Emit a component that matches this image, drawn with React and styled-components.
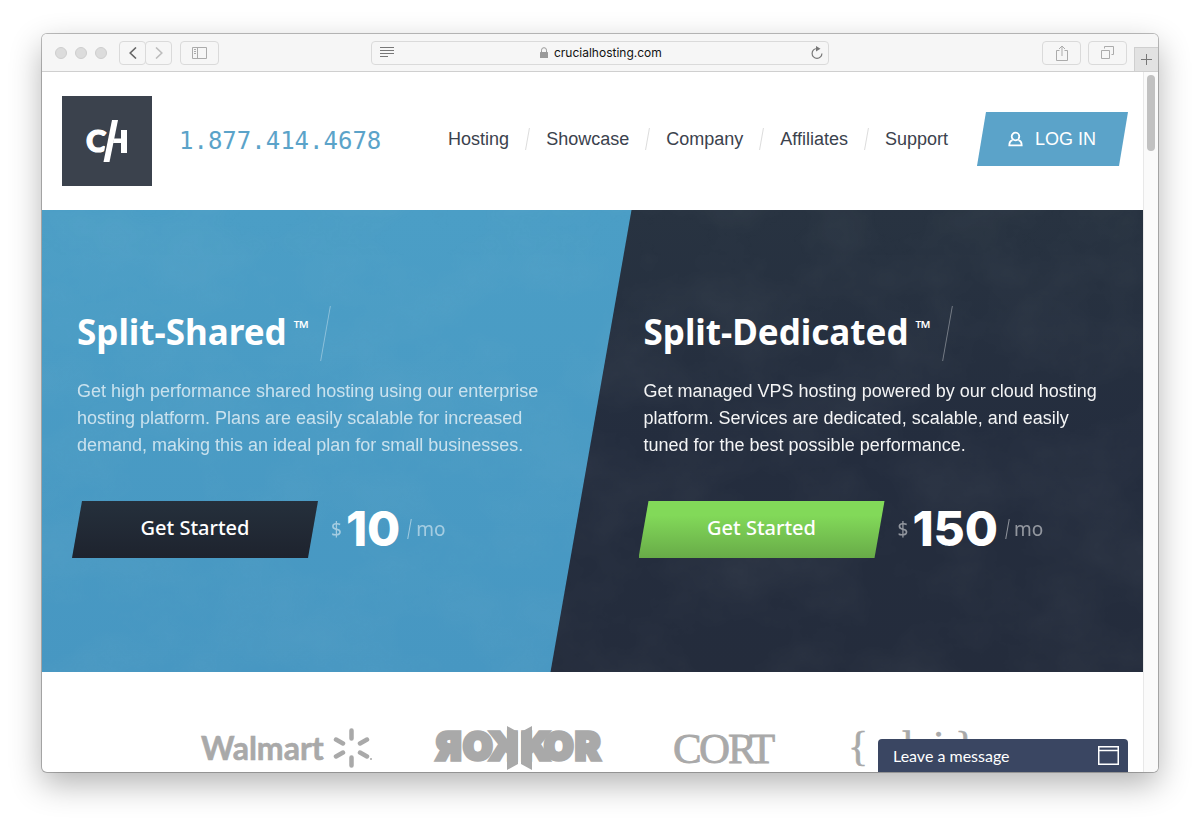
import React from 'react';
import styled, { createGlobalStyle } from 'styled-components';

const sans = '"Liberation Sans", Arial, sans-serif';
const display = '"Noto Sans", "Open Sans", sans-serif';
const logoGray = '#a9a9a9';

const GlobalStyle = createGlobalStyle`
  *, *::before, *::after { box-sizing: border-box; }
  body { margin: 0; background: #fff; font-family: ${sans}; }
  button { font: inherit; border: 0; padding: 0; margin: 0; cursor: pointer; }
  a { color: inherit; text-decoration: none; }
  svg { display: block; }
`;

const Desktop = styled.div`
  min-height: 100vh;
  padding: 34px 42px 50px;
  display: flex;
  overflow: hidden;
`;

const BrowserWindow = styled.div`
  flex: 1;
  min-width: 0;
  display: flex;
  flex-direction: column;
  overflow: hidden;
  background: #fff;
  border-radius: 5px;
  box-shadow: 0 0 0 1px rgba(0, 0, 0, 0.25), 0 12px 32px rgba(0, 0, 0, 0.3);
`;

const Toolbar = styled.div`
  display: grid;
  grid-template-columns: 1fr minmax(0, 41%) 1fr;
  height: 38px;
  background: #f6f6f6;
  border-bottom: 1px solid #cfcfcf;
`;

const ToolGroup = styled.div`
  display: flex;
  align-items: center;
  justify-content: ${(p) => (p.$end ? 'flex-end' : 'flex-start')};
  gap: ${(p) => (p.$end ? '7px' : '8px')};
  padding-left: ${(p) => (p.$end ? '0' : '13px')};
`;

const Lights = styled.div`
  display: flex;
  gap: 8px;
  margin-right: 4px;
`;

const Light = styled.span`
  width: 12px;
  height: 12px;
  border-radius: 50%;
  background: #dcdcdc;
  border: 1px solid #cecece;
`;

const ToolButton = styled.button`
  display: flex;
  align-items: center;
  justify-content: center;
  width: ${(p) => (p.$narrow ? '27px' : '39px')};
  height: 24px;
  background: #f6f6f6;
  border: 1px solid #dadada;
  border-radius: 4px;
  color: ${(p) => p.$tone || '#ababab'};
`;

const Joined = styled.div`
  display: flex;
  ${ToolButton} + ${ToolButton} { margin-left: -1px; }
`;

const NewTab = styled.button`
  display: flex;
  align-items: center;
  justify-content: center;
  align-self: flex-end;
  width: 24px;
  height: 24px;
  background: #e2e2e2;
  border-top: 1px solid #cfcfcf;
  border-left: 1px solid #cfcfcf;
  color: #777;
`;

const AddressBar = styled.div`
  display: grid;
  grid-template-columns: 1fr auto 1fr;
  align-items: center;
  align-self: center;
  height: 24px;
  padding: 0 5px 0 8px;
  border: 1px solid #dadada;
  border-radius: 4px;
  color: #777;
  > :last-child { justify-self: end; }
`;

const Location = styled.label`
  display: flex;
  align-items: center;
  gap: 6px;
  color: #9a9a9a;
`;

const LocationInput = styled.input`
  width: 109px;
  padding: 0;
  border: 0;
  outline: 0;
  background: transparent;
  color: #111;
  font: 12px/16px Inter, sans-serif;
`;

const IconButton = styled.button`
  background: none;
  color: inherit;
`;

const Viewport = styled.div`
  position: relative;
  flex: 1;
  display: flex;
`;

const Page = styled.main`
  flex: 1;
  min-width: 0;
`;

const ScrollTrack = styled.div`
  width: 15px;
  padding: 3px;
  background: #fafafa;
  border-left: 1px solid #e8e8e8;
`;

const ScrollThumb = styled.div`
  width: 8px;
  height: 76px;
  border-radius: 4px;
  background: #c1c1c1;
`;

const Header = styled.header`
  display: flex;
  align-items: center;
  padding: 24px 15px 24px 20px;
`;

const Brand = styled.a`
  width: 90px;
  height: 90px;
  background: #3b424d;
`;

const Phone = styled.a`
  margin-left: 27px;
  color: #5ba3c9;
  font: 24px/28px "DejaVu Sans Mono", monospace;
`;

const HeaderRight = styled.div`
  display: flex;
  align-items: center;
  margin-left: auto;
  padding-bottom: 4px;
  font-size: 18px;
  line-height: 24px;
`;

const Nav = styled.nav`
  display: flex;
  align-items: center;
  gap: 18px;
  margin-right: 29px;
  color: #3b424d;
`;

const Slash = styled.span`
  width: 1px;
  height: ${(p) => p.$height};
  background: ${(p) => p.$color};
  transform: skewX(-10deg);
`;

const LoginLink = styled.a`
  display: flex;
  align-items: center;
  gap: 12px;
  height: 54px;
  padding: 0 32px 0 31px;
  background: #5ba3c9;
  color: #fff;
  clip-path: polygon(9px 0, 100% 0, calc(100% - 9px) 100%, 0 100%);
`;

const Hero = styled.section`
  position: relative;
  display: grid;
  grid-template-columns: 1fr 1fr;
  background: linear-gradient(#283341, #242d3e 50%, #242c3c);
  &::before {
    content: '';
    position: absolute;
    inset: 0;
    background: linear-gradient(#4b9ec6, #4797c2);
    clip-path: polygon(0 0, calc(50% + 39px) 0, calc(50% - 42px) 100%, 0 100%);
  }
`;

const CloudTexture = styled.svg`
  position: absolute;
  inset: 0;
  width: 100%;
  height: 100%;
`;

const Plan = styled.article`
  position: relative;
  padding: 96px 32px 114px ${(p) => (p.$second ? '51px' : '35px')};
  color: #fff;
`;

const PlanTitle = styled.div`
  display: flex;
  align-items: center;
  gap: 16px;
  height: 55px;
`;

const PlanName = styled.h2`
  display: flex;
  align-items: flex-start;
  gap: 7px;
  margin: 0;
  padding-bottom: 4px;
  font: 700 35px/40px ${display};
`;

const Trademark = styled.sup`
  padding-top: 6px;
  font: 400 20px/20px ${display};
`;

const PlanText = styled.p`
  max-width: 466px;
  margin: 17px 0 42px;
  font-size: 18px;
  line-height: 27px;
  opacity: ${(p) => (p.$soft ? 0.7 : 0.95)};
`;

const PlanAction = styled.div`
  display: flex;
  align-items: center;
  gap: 13px;
  margin-left: -5px;
`;

const StartButton = styled.button`
  width: 246px;
  height: 57px;
  padding-bottom: 4px;
  background: ${(p) =>
    p.$green
      ? 'linear-gradient(#82d959 25%, #68ab48)'
      : 'linear-gradient(#25303c, #1e232e)'};
  color: #fff;
  font: 500 20px/24px ${display};
  clip-path: polygon(10px 0, 100% 0, calc(100% - 10px) 100%, 0 100%);
`;

const Price = styled.div`
  display: flex;
  align-items: center;
  padding-bottom: 2px;
  font: 19px/24px ${display};
`;

const Muted = styled.span`
  opacity: 0.5;
`;

const Amount = styled.strong`
  margin: 0 9px 0 4px;
  font: 800 48px/48px Inter, sans-serif;
`;

const Period = styled.span`
  display: flex;
  align-items: center;
  gap: 6px;
  opacity: 0.5;
`;

const Clients = styled.section`
  display: flex;
  justify-content: center;
  gap: 65px;
  padding: 54px 20px 2px;
`;

const ClientLogo = styled.svg`
  height: 44px;
  overflow: visible;
  fill: ${logoGray};
`;

const ChatButton = styled.button`
  position: absolute;
  right: 30px;
  bottom: 0;
  display: flex;
  align-items: center;
  justify-content: space-between;
  width: 250px;
  height: 33px;
  padding: 0 9px 0 15px;
  background: #3a4662;
  color: #fff;
  border-radius: 4px 4px 0 0;
  font: 16px/24px Lato, sans-serif;
`;

function Icon({ w, h, children, ...rest }) {
  return (
    <svg width={w} height={h} viewBox={`0 0 ${w} ${h}`} fill="none" stroke="currentColor" aria-hidden="true" {...rest}>
      {children}
    </svg>
  );
}

function BrowserToolbar() {
  return (
    <Toolbar>
      <ToolGroup>
        <Lights><Light /><Light /><Light /></Lights>
        <Joined>
          <ToolButton $narrow $tone="#666" aria-label="Back">
            <Icon w={8} h={12} strokeWidth="1.6"><path d="M7 .5 1.2 6 7 11.5" /></Icon>
          </ToolButton>
          <ToolButton $narrow $tone="#bdbdbd" aria-label="Forward">
            <Icon w={8} h={12} strokeWidth="1.6"><path d="M1 .5 6.8 6 1 11.5" /></Icon>
          </ToolButton>
        </Joined>
        <ToolButton aria-label="Sidebar">
          <Icon w={15} h={12}><path d="M.5.5h14v11H.5zM5.500.5v11M2 2.500h2M2 4.500h2M2 6.500h2" /></Icon>
        </ToolButton>
      </ToolGroup>
      <AddressBar>
        <Icon w={14} h={11}><path d="M0 .5h14M0 3.500h14M0 6.500h14M0 9.500h8" /></Icon>
        <Location>
          <Icon w={8} h={11}>
            <rect y="5" width="8" height="6" rx="0.5" fill="currentColor" stroke="none" />
            <path d="M1.500 5V3.200a2.500 2.500 0 0 1 5 0V5" />
          </Icon>
          <LocationInput aria-label="Address" defaultValue="crucialhosting.com" />
        </Location>
        <IconButton aria-label="Reload">
          <Icon w={12} h={13}>
            <path d="M6 2.500a4.900 4.900 0 1 0 4.900 4.900" strokeWidth="1.200" />
            <path d="M5 0 9.500 2.700 5 5.400z" fill="currentColor" stroke="none" />
          </Icon>
        </IconButton>
      </AddressBar>
      <ToolGroup $end>
        <ToolButton aria-label="Share">
          <Icon w={12} h={16}><path d="M3.500 5.500h-3v10h11v-10h-3M6 11V1M3 4l3-3 3 3" /></Icon>
        </ToolButton>
        <ToolButton aria-label="Show tabs">
          <Icon w={13} h={13}><path d="M.5 4.500h8v8h-8zM3.500 2.500v-2h9v8h-2" /></Icon>
        </ToolButton>
        <NewTab aria-label="New tab">
          <Icon w={11} h={11}><path d="M5.500 0v11M0 5.500h11" /></Icon>
        </NewTab>
      </ToolGroup>
    </Toolbar>
  );
}

const links = ['Hosting', 'Showcase', 'Company', 'Affiliates', 'Support'];

function SiteHeader() {
  return (
    <Header>
      <Brand href="#home" aria-label="Crucial Hosting">
        <svg width="90" height="90" viewBox="0 0 90 90" fill="#fff">
          <text x="24" y="56" fontFamily="Lato" fontWeight="900" fontSize="31" stroke="#fff" strokeWidth="1.200">C</text>
          <path d="M48.500 24h3L43 66h-3z" fill="#3b424d" />
          <path d="M50 24h6L47.500 66h-6z" />
          <path d="M52 42.500h7V34h6v23h-6V47h-8z" />
        </svg>
      </Brand>
      <Phone href="tel:18774144678">1.877.414.4678</Phone>
      <HeaderRight>
        <Nav>
          {links.map((name, i) => (
            <React.Fragment key={name}>
              {i > 0 && <Slash $height="22px" $color="#dcdcdc" />}
              <a href={`#${name.toLowerCase()}`}>{name}</a>
            </React.Fragment>
          ))}
        </Nav>
        <LoginLink href="#login">
          <Icon w={15} h={16} strokeWidth="1.800">
            <circle cx="7.500" cy="5.500" r="3.800" />
            <path d="M4.600 9.200C2.400 9.800 1.300 11 1.300 14.400h12.400c0-3.400-1.100-4.600-3.300-5.200" />
          </Icon>
          LOG IN
        </LoginLink>
      </HeaderRight>
    </Header>
  );
}

function PlanPanel({ name, text, price, second }) {
  return (
    <Plan $second={second}>
      <PlanTitle>
        <PlanName>{name}<Trademark>™</Trademark></PlanName>
        <Slash $height="55px" $color="rgba(255,255,255,.35)" />
      </PlanTitle>
      <PlanText $soft={!second}>{text}</PlanText>
      <PlanAction>
        <StartButton $green={second}>Get Started</StartButton>
        <Price>
          <Muted>$</Muted>
          <Amount>{price}</Amount>
          <Period><Slash $height="20px" $color="#fff" />mo</Period>
        </Price>
      </PlanAction>
    </Plan>
  );
}

function ClientLogos() {
  return (
    <Clients>
      <ClientLogo width="170" viewBox="0 0 170 44" role="img" aria-label="Walmart">
        <text x="0" y="34" fontFamily="Lato" fontWeight="700" fontSize="32" stroke={logoGray} strokeWidth="0.6">Walmart</text>
        <g stroke={logoGray} strokeWidth="4.500" strokeLinecap="round">
          <path d="M150.500 4.500v8M150.500 31.500v8M135 13.500l7 4M135 30.500l7-4M166 13.500l-7 4M166 30.500l-7-4" />
        </g>
        <circle cx="170" cy="33" r="1" />
      </ClientLogo>
      <ClientLogo width="173" viewBox="0 0 173 44" role="img" aria-label="Rokkor">
        <g fontFamily="Inter" fontWeight="900" fontSize="38" stroke={logoGray} strokeWidth="3.500">
          <text x="0" y="34">Я</text>
          <text x="27" y="34">O</text>
          <text x="-82" y="34" transform="scale(-1 1)">K</text>
          <text x="85" y="34">K</text>
          <text x="108" y="34">O</text>
          <text x="139" y="34">R</text>
        </g>
        <path d="M71 0 82 6v32L71 44zM96 0 85 6v32l11 6z" />
        <path d="M83.500 4v36" stroke="#fff" strokeWidth="2" />
      </ClientLogo>
      <ClientLogo width="112" viewBox="0 0 112 44" role="img" aria-label="Cort">
        <g fontFamily="Liberation Serif" fontSize="43" stroke={logoGray} strokeWidth="0.8">
          <text x="-1" y="37">C</text>
          <text x="25" y="37">O</text>
          <text x="54" y="37">R</text>
          <text x="75" y="37">T</text>
        </g>
      </ClientLogo>
      <ClientLogo width="133" viewBox="0 0 133 44">
        <g fontFamily="Liberation Serif" fontSize="42" stroke={logoGray} strokeWidth="0.6">
          <text x="-3" y="34">{'{'}</text>
          <text x="51" y="34">l</text>
          <text x="82" y="34">i</text>
          <text x="104" y="34">{'}'}</text>
        </g>
      </ClientLogo>
    </Clients>
  );
}

export default function App() {
  return (
    <Desktop>
      <GlobalStyle />
      <BrowserWindow>
        <BrowserToolbar />
        <Viewport>
          <Page>
            <SiteHeader />
            <Hero>
              <CloudTexture aria-hidden="true">
                <filter id="clouds" x="0" y="0" width="100%" height="100%">
                  <feTurbulence type="fractalNoise" baseFrequency="0.011 0.013" numOctaves="6" seed="8" />
                  <feColorMatrix values="0 0 0 0 .7  0 0 0 0 .75  0 0 0 0 .7  .5 0 0 0 -.17" />
                </filter>
                <rect width="100%" height="100%" filter="url(#clouds)" opacity="0.18" />
              </CloudTexture>
              <PlanPanel
                name="Split-Shared"
                price="10"
                text="Get high performance shared hosting using our enterprise hosting platform. Plans are easily scalable for increased demand, making this an ideal plan for small businesses."
              />
              <PlanPanel
                second
                name="Split-Dedicated"
                price="150"
                text="Get managed VPS hosting powered by our cloud hosting platform. Services are dedicated, scalable, and easily tuned for the best possible performance."
              />
            </Hero>
            <ClientLogos />
          </Page>
          <ScrollTrack><ScrollThumb /></ScrollTrack>
          <ChatButton>
            Leave a message
            <Icon w={21} h={19} strokeWidth="1.500"><path d="M.75.75h19.500v17.500H.75zM.75 4.500h19.500" /></Icon>
          </ChatButton>
        </Viewport>
      </BrowserWindow>
    </Desktop>
  );
}
